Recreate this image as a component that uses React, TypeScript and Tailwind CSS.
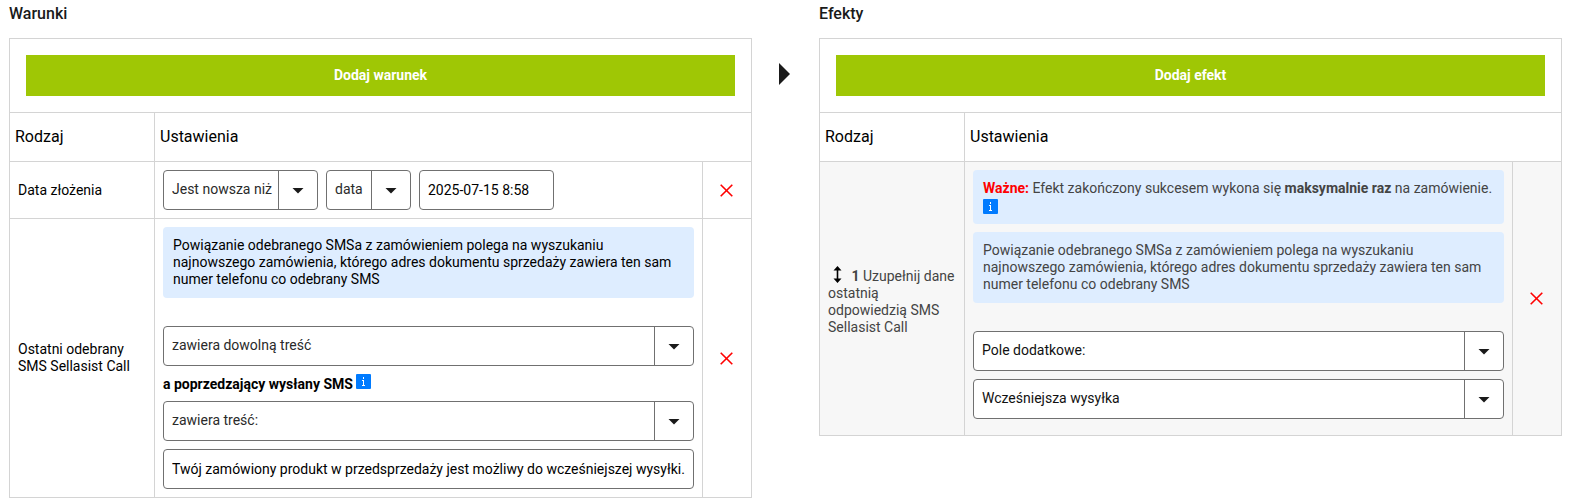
import React, { useState } from 'react';

interface SelectBoxProps {
  label: string;
  options: string[];
  className?: string;
  textClassName?: string;
}

const smsInfo =
  'Powiązanie odebranego SMSa z zamówieniem polega na wyszukaniu najnowszego zamówienia, którego adres dokumentu sprzedaży zawiera ten sam numer telefonu co odebrany SMS';

function SelectBox({ label, options, className = 'w-full', textClassName = 'text-[#2a2a2a]' }: SelectBoxProps) {
  return (
    <div className={`flex h-10 overflow-hidden rounded border border-[#707070] bg-white ${className}`}>
      <select
        aria-label={label}
        className={`min-w-0 flex-1 appearance-none bg-transparent pb-0.5 pl-2 outline-none ${textClassName}`}
      >
        {options.map((option) => (
          <option key={option}>{option}</option>
        ))}
      </select>
      <span className="pointer-events-none flex w-[39px] shrink-0 items-center justify-center border-l border-[#707070] pt-0.5">
        <svg width="12" height="6" viewBox="0 0 12 6" fill="#1a1a1a" aria-hidden="true">
          <path d="M.5 0h11L6 5.5z" />
        </svg>
      </span>
    </div>
  );
}

function TextBox({ label, initial, className }: { label: string; initial: string; className: string }) {
  const [value, setValue] = useState(initial);

  return (
    <input
      type="text"
      aria-label={label}
      value={value}
      onChange={(e) => setValue(e.target.value)}
      className={`h-10 rounded border border-[#707070] bg-white px-2 text-black outline-none ${className}`}
    />
  );
}

function InfoIcon({ className = '' }: { className?: string }) {
  return (
    <svg width="15" height="15" viewBox="0 0 15 15" className={className} role="img" aria-label="Informacja">
      <rect width="15" height="15" rx="1" fill="#007bff" />
      <path d="M7 3h1v2H7zM6 6h2v5h1v1H6v-1h1V7H6z" fill="#fff" />
    </svg>
  );
}

function InfoBox({ children }: { children: React.ReactNode }) {
  return <div className="rounded bg-[#deedff] p-2.5">{children}</div>;
}

function MoveIcon() {
  return (
    <svg width="20" height="23" viewBox="0 0 20 23" className="inline-block align-text-bottom" aria-hidden="true">
      <path d="M9.5 5L13.5 9.5H10.3V17.5H13.5L9.5 22L5.5 17.5H8.7V9.5H5.5z" fill="#000" />
    </svg>
  );
}

function RemoveCell() {
  return (
    <td className="border border-[#d4d4d4] text-center">
      <button type="button" aria-label="Usuń" className="inline-flex align-middle">
        <svg width="14" height="14" viewBox="0 0 14 14" stroke="#f00" strokeWidth="1.6" aria-hidden="true">
          <path d="M.7.7l11.6 11.6M12.3.7L.7 12.3" />
        </svg>
      </button>
    </td>
  );
}

interface RulePanelProps {
  title: string;
  action: string;
  children: React.ReactNode;
}

function RulePanel({ title, action, children }: RulePanelProps) {
  return (
    <section>
      <h2 className="mb-2.5 text-base leading-7 font-medium text-[#1a1a1a]">{title}</h2>
      <table className="w-full table-fixed border-collapse border border-[#d4d4d4] text-black">
        <colgroup>
          <col className="w-[145px]" />
          <col />
          <col className="w-[49px]" />
        </colgroup>
        <thead>
          <tr>
            <td colSpan={3} className="border border-[#d4d4d4] p-4">
              <button type="button" className="block h-[41px] w-full bg-[#9fc705] font-bold text-white">
                {action}
              </button>
            </td>
          </tr>
          <tr className="h-[49px] text-left text-base">
            <th className="border border-[#d4d4d4] px-[5px] font-normal">Rodzaj</th>
            <th colSpan={2} className="border border-[#d4d4d4] px-[5px] font-normal">
              Ustawienia
            </th>
          </tr>
        </thead>
        <tbody>{children}</tbody>
      </table>
    </section>
  );
}

export default function App() {
  return (
    <main className="grid grid-cols-[1fr_67px_1fr] items-start bg-white pr-[7px] pl-[9px] font-[Roboto,sans-serif] text-sm leading-[17px]">
      <RulePanel title="Warunki" action="Dodaj warunek">
        <tr>
          <td className="border border-[#d4d4d4] p-2">Data złożenia</td>
          <td className="border border-[#d4d4d4] p-2">
            <div className="flex gap-2">
              <SelectBox label="Porównanie daty" options={['Jest nowsza niż', 'Jest starsza niż']} className="w-[155px]" />
              <SelectBox label="Typ daty" options={['data', 'dni']} className="w-[85px]" />
              <TextBox label="Data złożenia" initial="2025-07-15 8:58" className="w-[135px]" />
            </div>
          </td>
          <RemoveCell />
        </tr>
        <tr>
          <td className="border border-[#d4d4d4] p-2">Ostatni odebrany SMS Sellasist Call</td>
          <td className="border border-[#d4d4d4] p-2">
            <InfoBox>{smsInfo}</InfoBox>
            <div className="mt-7">
              <SelectBox label="Odebrany SMS" options={['zawiera dowolną treść', 'zawiera treść:']} />
            </div>
            <div className="flex h-[35px] items-center gap-[3px] pt-0.5">
              <strong className="font-bold">a poprzedzający wysłany SMS</strong>
              <InfoIcon className="mb-1.5" />
            </div>
            <div className="flex flex-col gap-2">
              <SelectBox label="Poprzedzający wysłany SMS" options={['zawiera treść:', 'zawiera dowolną treść']} />
              <TextBox
                label="Treść SMS"
                initial="Twój zamówiony produkt w przedsprzedaży jest możliwy do wcześniejszej wysyłki."
                className="w-full"
              />
            </div>
          </td>
          <RemoveCell />
        </tr>
      </RulePanel>

      <div className="flex justify-center pt-[63px]">
        <svg width="13" height="22" viewBox="0 0 13 22" fill="#1a1a1a" aria-hidden="true">
          <path d="M0 0l11 11L0 22z" />
        </svg>
      </div>

      <RulePanel title="Efekty" action="Dodaj efekt">
        <tr className="bg-[#f7f7f7] text-[#444]">
          <td className="border border-[#d4d4d4] p-2">
            <MoveIcon /> <strong className="font-bold">1</strong> Uzupełnij dane ostatnią odpowiedzią SMS Sellasist Call
          </td>
          <td className="border border-[#d4d4d4] px-2 pt-2 pb-4">
            <div className="flex flex-col gap-2">
              <InfoBox>
                <strong className="font-bold text-[#f00]">Ważne:</strong> Efekt zakończony sukcesem wykona się{' '}
                <strong className="font-bold">maksymalnie raz</strong> na zamówienie.
                <InfoIcon className="mt-0.5" />
              </InfoBox>
              <InfoBox>{smsInfo}</InfoBox>
            </div>
            <div className="mt-7 flex flex-col gap-2">
              <SelectBox label="Pole" options={['Pole dodatkowe:']} textClassName="text-[#111]" />
              <SelectBox label="Pole dodatkowe" options={['Wcześniejsza wysyłka']} textClassName="text-[#111]" />
            </div>
          </td>
          <RemoveCell />
        </tr>
      </RulePanel>
    </main>
  );
}
